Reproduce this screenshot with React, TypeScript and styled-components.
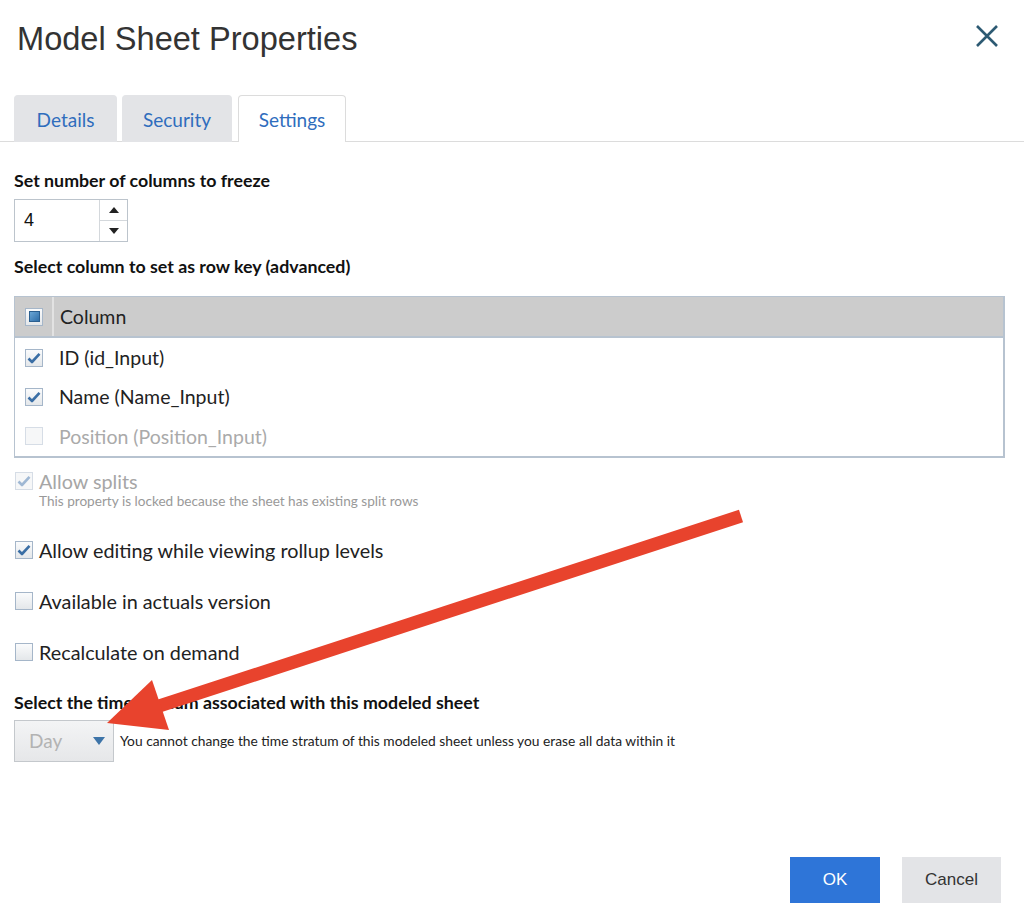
import React from 'react';
import styled, { createGlobalStyle } from 'styled-components';

const GlobalStyle = createGlobalStyle`
  html, body {
    margin: 0;
    padding: 0;
    background: #ffffff;
  }
  body {
    font-family: Lato, "Open Sans", sans-serif;
    color: #222;
  }
`;

const CheckMark: React.FC<{ color: string }> = ({ color }) => (
  <svg width="14" height="12" viewBox="0 0 14 12">
    <path d="M1.5 6.5 L5 10 L12.5 1.8" fill="none" stroke={color} strokeWidth="2.6" strokeLinejoin="round" />
  </svg>
);

type BoxState = 'checked' | 'unchecked' | 'mixed';

const Checkbox: React.FC<{ state: BoxState; disabled?: boolean }> = ({ state, disabled }) => (
  <Box $disabled={disabled}>
    {state === 'checked' && <CheckMark color={disabled ? '#9fb8d4' : '#3a6ea5'} />}
    {state === 'mixed' && <MixedFill />}
  </Box>
);

const App: React.FC = () => {
  const columns = [
    { label: 'ID (id_Input)', checked: true, disabled: false },
    { label: 'Name (Name_Input)', checked: true, disabled: false },
    { label: 'Position (Position_Input)', checked: false, disabled: true },
  ];

  const options = [
    { label: 'Allow editing while viewing rollup levels', checked: true },
    { label: 'Available in actuals version', checked: false },
    { label: 'Recalculate on demand', checked: false },
  ];

  return (
    <Page>
      <GlobalStyle />
      <Header>
        <Title>Model Sheet Properties</Title>
        <CloseButton aria-label="Close">
          <svg width="24" height="24" viewBox="0 0 24 24">
            <path d="M2 2 L22 22 M22 2 L2 22" stroke="#2d5a73" strokeWidth="2.6" />
          </svg>
        </CloseButton>
      </Header>

      <TabStrip>
        <Tab $width={103}>Details</Tab>
        <Tab $width={110}>Security</Tab>
        <Tab $width={108} $active>Settings</Tab>
      </TabStrip>

      <Content>
        <SectionLabel>Set number of columns to freeze</SectionLabel>
        <Spinner>
          <SpinnerValue>4</SpinnerValue>
          <SpinnerButtons>
            <SpinnerButton>
              <Triangle $up />
            </SpinnerButton>
            <SpinnerButton>
              <Triangle />
            </SpinnerButton>
          </SpinnerButtons>
        </Spinner>

        <SectionLabel $top={14}>Select column to set as row key (advanced)</SectionLabel>
        <Table>
          <HeaderRow>
            <CheckCell $header>
              <Checkbox state="mixed" />
            </CheckCell>
            <HeaderText>Column</HeaderText>
          </HeaderRow>
          {columns.map((c) => (
            <BodyRow key={c.label}>
              <CheckCell>
                <Checkbox state={c.checked ? 'checked' : 'unchecked'} disabled={c.disabled} />
              </CheckCell>
              <RowText $disabled={c.disabled}>{c.label}</RowText>
            </BodyRow>
          ))}
        </Table>

        <LockedOption>
          <OptionLine>
            <Checkbox state="checked" disabled />
            <OptionText $disabled>Allow splits</OptionText>
          </OptionLine>
          <Hint>This property is locked because the sheet has existing split rows</Hint>
        </LockedOption>

        <OptionList>
          {options.map((o) => (
            <OptionLine key={o.label}>
              <Checkbox state={o.checked ? 'checked' : 'unchecked'} />
              <OptionText>{o.label}</OptionText>
            </OptionLine>
          ))}
        </OptionList>

        <SectionLabel $top={28}>Select the time stratum associated with this modeled sheet</SectionLabel>
        <SelectRow>
          <Select>
            <span>Day</span>
            <SelectArrow />
          </Select>
          <SelectNote>
            You cannot change the time stratum of this modeled sheet unless you erase all data within it
          </SelectNote>
        </SelectRow>
      </Content>

      <Footer>
        <PrimaryButton>OK</PrimaryButton>
        <SecondaryButton>Cancel</SecondaryButton>
      </Footer>

      <ArrowOverlay width="1024" height="923" viewBox="0 0 1024 923">
        <line x1="741" y1="516" x2="150" y2="709" stroke="#e8432d" strokeWidth="13" />
        <polygon points="107,723 152,680 169,730" fill="#e8432d" />
      </ArrowOverlay>
    </Page>
  );
};

export default App;

const Page = styled.div`
  position: relative;
  width: 1024px;
  height: 923px;
  overflow: hidden;
  display: flex;
  flex-direction: column;
`;

const Header = styled.div`
  display: flex;
  align-items: center;
  justify-content: space-between;
  height: 78px;
  padding: 0 25px 0 17px;
`;

const Title = styled.h1`
  margin: 0;
  font-family: "Liberation Sans", Arial, sans-serif;
  font-weight: 400;
  font-size: 32.6px;
  color: #333;
`;

const CloseButton = styled.div`
  display: flex;
  margin-top: -6px;
`;

const TabStrip = styled.div`
  display: flex;
  gap: 5px;
  margin-top: 17px;
  padding-left: 14px;
  border-bottom: 1px solid #dcdcdc;
`;

const Tab = styled.div<{ $width: number; $active?: boolean }>`
  width: ${(p) => p.$width}px;
  height: 47px;
  box-sizing: border-box;
  display: flex;
  align-items: center;
  justify-content: center;
  font-size: 19px;
  color: #2f6dbd;
  border-radius: 4px 4px 0 0;
  background: ${(p) => (p.$active ? '#fff' : '#e3e4e7')};
  border: 1px solid ${(p) => (p.$active ? '#dcdcdc' : '#e3e4e7')};
  border-bottom: none;
  margin-bottom: -1px;
  ${(p) => (p.$active ? 'margin-left: 1px;' : '')}
`;

const Content = styled.div`
  display: flex;
  flex-direction: column;
  align-items: flex-start;
  padding: 28px 19px 0 14px;
`;

const SectionLabel = styled.div<{ $top?: number }>`
  font-weight: 700;
  font-size: 17.8px;
  line-height: 20px;
  color: #111;
  margin-top: ${(p) => p.$top ?? 0}px;
`;

const Spinner = styled.div`
  display: flex;
  width: 114px;
  height: 43px;
  box-sizing: border-box;
  border: 1px solid #bcc4cc;
  margin-top: 9px;
`;

const SpinnerValue = styled.div`
  flex: 1;
  display: flex;
  align-items: center;
  padding-left: 9px;
  font-size: 18px;
  font-family: "Liberation Sans", Arial, sans-serif;
  color: #111;
`;

const SpinnerButtons = styled.div`
  width: 27px;
  display: flex;
  flex-direction: column;
  border-left: 1px solid #d4d8dc;
`;

const SpinnerButton = styled.div`
  flex: 1;
  display: flex;
  align-items: center;
  justify-content: center;
  & + & {
    border-top: 1px solid #d4d8dc;
  }
`;

const Triangle = styled.span<{ $up?: boolean }>`
  width: 0;
  height: 0;
  border-left: 5px solid transparent;
  border-right: 5px solid transparent;
  ${(p) => (p.$up ? 'border-bottom: 6px solid #222;' : 'border-top: 6px solid #222;')}
`;

const Table = styled.div`
  align-self: stretch;
  margin-top: 20px;
  border: 2px solid #b7c3d0;
  border-width: 1px 2px 2px 1px;
`;

const HeaderRow = styled.div`
  display: flex;
  height: 39px;
  background: #cccccc;
  border-bottom: 2px solid #b7c3d0;
`;

const CheckCell = styled.div<{ $header?: boolean }>`
  width: 36px;
  display: flex;
  align-items: center;
  justify-content: center;
  padding-left: 1px;
  ${(p) => (p.$header ? 'border-right: 2px solid #e2e2e2;' : '')}
`;

const HeaderText = styled.div`
  display: flex;
  align-items: center;
  padding-left: 6px;
  font-size: 19.5px;
  color: #222;
`;

const BodyRow = styled.div`
  display: flex;
  height: 39.3px;
`;

const RowText = styled.div<{ $disabled?: boolean }>`
  display: flex;
  align-items: center;
  padding-left: 7px;
  font-size: 19.5px;
  color: ${(p) => (p.$disabled ? '#aaa' : '#222')};
`;

const Box = styled.span<{ $disabled?: boolean }>`
  width: 18px;
  height: 18px;
  display: inline-flex;
  align-items: center;
  justify-content: center;
  box-sizing: border-box;
  border: 1px solid ${(p) => (p.$disabled ? '#d6dde6' : '#a5b6c9')};
  background: ${(p) =>
    p.$disabled ? '#f6f7f8' : 'linear-gradient(#fafbfc, #e4e7ea)'};
  flex-shrink: 0;
`;

const MixedFill = styled.span`
  width: 11px;
  height: 11px;
  background: linear-gradient(135deg, #6aa6d6, #2f6ea8);
  border: 1px solid #2a5f90;
  box-sizing: border-box;
`;

const LockedOption = styled.div`
  display: flex;
  flex-direction: column;
  margin-top: 11px;
  padding-left: 1px;
`;

const OptionLine = styled.div`
  display: flex;
  align-items: center;
  gap: 6px;
  height: 24px;
`;

const OptionText = styled.span<{ $disabled?: boolean }>`
  font-size: 19.8px;
  color: ${(p) => (p.$disabled ? '#a6a6a6' : '#222')};
`;

const Hint = styled.div`
  font-size: 13.6px;
  line-height: 17px;
  color: #999;
  padding-left: 24px;
`;

const OptionList = styled.div`
  display: flex;
  flex-direction: column;
  gap: 27px;
  margin-top: 28px;
  padding-left: 1px;
`;

const SelectRow = styled.div`
  display: flex;
  align-items: center;
  gap: 6px;
  margin-top: 8px;
`;

const Select = styled.div`
  width: 100px;
  height: 42px;
  box-sizing: border-box;
  display: flex;
  align-items: center;
  justify-content: space-between;
  padding: 0 8px 0 14px;
  border: 1px solid #c4c8cc;
  background: linear-gradient(#f3f4f5, #e6e7e9);
  font-size: 19px;
  color: #b3b3b3;
`;

const SelectArrow = styled.span`
  width: 0;
  height: 0;
  border-left: 6px solid transparent;
  border-right: 6px solid transparent;
  border-top: 8px solid #3d74a8;
`;

const SelectNote = styled.span`
  font-size: 13.8px;
  color: #222;
`;

const Footer = styled.div`
  margin-top: auto;
  display: flex;
  justify-content: flex-end;
  gap: 22px;
  padding: 0 23px 20px 0;
`;

const ButtonBase = styled.div`
  height: 46px;
  display: flex;
  align-items: center;
  justify-content: center;
  font-family: "Liberation Sans", Arial, sans-serif;
  font-size: 17px;
`;

const PrimaryButton = styled(ButtonBase)`
  width: 90px;
  background: #2e75d8;
  color: #fff;
`;

const SecondaryButton = styled(ButtonBase)`
  width: 99px;
  background: #e3e4e7;
  color: #333;
`;

const ArrowOverlay = styled.svg`
  position: absolute;
  left: 0;
  top: 0;
  pointer-events: none;
`;
